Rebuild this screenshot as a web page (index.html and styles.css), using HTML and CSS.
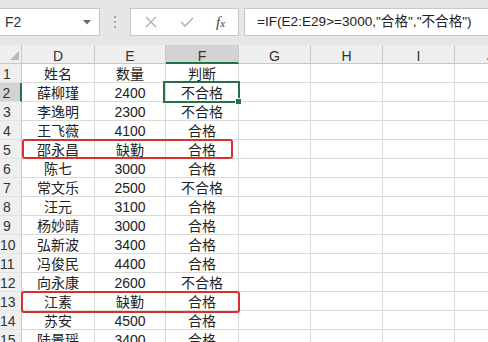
FILE: index.html
```html
<!DOCTYPE html>
<html>
<head>
<meta charset="utf-8">
<link rel="stylesheet" href="styles.css">
</head>
<body>
<div class="toolbar">
  <div class="namebox"><span>F2</span><svg class="dd" width="8" height="5" viewBox="0 0 8 5"><path d="M0 0H8L4 4.5Z" fill="#6a6a6a"/></svg></div>
  <div class="dots"><i></i><i></i><i></i></div>
  <div class="fbuttons">
    <svg class="ic" width="12" height="12" viewBox="0 0 12 12"><path d="M1 1L11 11M11 1L1 11" stroke="#b3b3b3" stroke-width="1.4" fill="none"/></svg>
    <svg class="ic" width="14" height="10" viewBox="0 0 14 10"><path d="M1 5L5 9L13 1" stroke="#b3b3b3" stroke-width="1.6" fill="none"/></svg>
    <span class="fx">f<span class="x">x</span></span>
  </div>
  <div class="finput">=IF(E2:E29&gt;=3000,"合格","不合格")</div>
</div>
<div class="sheet">
  <div class="c h corner"><svg width="22" height="18" viewBox="0 0 22 18"><path d="M10 15H19V6Z" fill="#b9b9b9"/></svg></div>
  <div class="c h">D</div><div class="c h">E</div><div class="c h sel">F</div><div class="c h">G</div><div class="c h">H</div><div class="c h">I</div><div class="c h">J</div>

  <div class="c rh">1</div><div class="c">姓名</div><div class="c">数量</div><div class="c">判断</div><div class="c"></div><div class="c"></div><div class="c"></div><div class="c"></div>
  <div class="c rh rsel">2</div><div class="c">薛柳瑾</div><div class="c">2400</div><div class="c">不合格</div><div class="c"></div><div class="c"></div><div class="c"></div><div class="c"></div>
  <div class="c rh">3</div><div class="c">李逸明</div><div class="c">2300</div><div class="c">不合格</div><div class="c"></div><div class="c"></div><div class="c"></div><div class="c"></div>
  <div class="c rh">4</div><div class="c">王飞薇</div><div class="c">4100</div><div class="c">合格</div><div class="c"></div><div class="c"></div><div class="c"></div><div class="c"></div>
  <div class="c rh">5</div><div class="c">邵永昌</div><div class="c">缺勤</div><div class="c">合格</div><div class="c"></div><div class="c"></div><div class="c"></div><div class="c"></div>
  <div class="c rh">6</div><div class="c">陈七</div><div class="c">3000</div><div class="c">合格</div><div class="c"></div><div class="c"></div><div class="c"></div><div class="c"></div>
  <div class="c rh">7</div><div class="c">常文乐</div><div class="c">2500</div><div class="c">不合格</div><div class="c"></div><div class="c"></div><div class="c"></div><div class="c"></div>
  <div class="c rh">8</div><div class="c">汪元</div><div class="c">3100</div><div class="c">合格</div><div class="c"></div><div class="c"></div><div class="c"></div><div class="c"></div>
  <div class="c rh">9</div><div class="c">杨妙晴</div><div class="c">3000</div><div class="c">合格</div><div class="c"></div><div class="c"></div><div class="c"></div><div class="c"></div>
  <div class="c rh">10</div><div class="c">弘新波</div><div class="c">3400</div><div class="c">合格</div><div class="c"></div><div class="c"></div><div class="c"></div><div class="c"></div>
  <div class="c rh">11</div><div class="c">冯俊民</div><div class="c">4400</div><div class="c">合格</div><div class="c"></div><div class="c"></div><div class="c"></div><div class="c"></div>
  <div class="c rh">12</div><div class="c">向永康</div><div class="c">2600</div><div class="c">不合格</div><div class="c"></div><div class="c"></div><div class="c"></div><div class="c"></div>
  <div class="c rh">13</div><div class="c">江素</div><div class="c">缺勤</div><div class="c">合格</div><div class="c"></div><div class="c"></div><div class="c"></div><div class="c"></div>
  <div class="c rh">14</div><div class="c">苏安</div><div class="c">4500</div><div class="c">合格</div><div class="c"></div><div class="c"></div><div class="c"></div><div class="c"></div>
  <div class="c rh">15</div><div class="c">陆景瑶</div><div class="c">3400</div><div class="c">合格</div><div class="c"></div><div class="c"></div><div class="c"></div><div class="c"></div>
</div>
<div class="selbox"><i class="handle"></i></div>
<div class="redbox r5"></div>
<div class="redbox r13"></div>
</body>
</html>
```

FILE: styles.css
```css
body {
  margin: 0;
  width: 488px;
  height: 342px;
  overflow: hidden;
  position: relative;
  background: #fff;
  font-family: "Liberation Sans", "Noto Sans CJK SC", sans-serif;
  color: #222;
}
.toolbar {
  height: 45px;
  box-sizing: border-box;
  padding-top: 8px;
  background: #e6e6e6;
  display: flex;
  align-items: flex-start;
}
.namebox {
  width: 100px;
  height: 28px;
  box-sizing: border-box;
  background: #fff;
  border: 1px solid #c8c8c8;
  border-left: none;
  display: flex;
  align-items: center;
  padding-left: 5px;
  font-size: 14px;
  color: #333;
}
.namebox .dd { margin-left: auto; margin-right: 8px; }
.dots {
  width: 30px;
  height: 28px;
  display: flex;
  flex-direction: column;
  align-items: center;
  justify-content: center;
  gap: 3px;
}
.dots i {
  width: 2px;
  height: 2px;
  background: #a6a6a6;
  display: block;
}
.fbuttons {
  width: 109px;
  height: 28px;
  box-sizing: border-box;
  background: #fff;
  border: 1px solid #c8c8c8;
  display: flex;
  align-items: center;
  padding-left: 14px;
}
.fbuttons .ic:nth-child(2) { margin-left: 23px; }
.fx {
  margin-left: 22px;
  font-family: "Liberation Serif", serif;
  font-style: italic;
  font-size: 15px;
  color: #444;
}
.fx .x { font-size: 11px; }
.finput {
  flex: 1;
  margin-left: 5px;
  height: 28px;
  box-sizing: border-box;
  background: #fff;
  border: 1px solid #c8c8c8;
  border-right: none;
  padding-left: 12px;
  font-size: 13.6px;
  line-height: 26px;
  color: #222;
  white-space: nowrap;
  overflow: hidden;
}
.sheet {
  display: grid;
  grid-template-columns: 22px 73px 71px 73px 72px 72px 72px 72px;
  grid-auto-rows: 19px;
}
.c {
  box-sizing: border-box;
  border-right: 1px solid #d9d9d9;
  border-bottom: 1px solid #d9d9d9;
  text-align: center;
  font-size: 14px;
  line-height: 17px;
  padding-top: 2px;
  white-space: nowrap;
  overflow: hidden;
}
.h {
  background: #efefef;
  border-right-color: #c8c8c8;
  border-bottom-color: #c8c8c8;
  color: #333;
  padding-top: 3px;
}
.h.sel {
  background: #d3d3d3;
  border-bottom: 2px solid #217346;
}
.corner { padding: 0; }
.corner svg { display: block; }
.rh {
  background: #efefef;
  border-right-color: #c8c8c8;
  border-bottom-color: #e3e3e3;
  padding-right: 7px;
  color: #333;
}
.rh.rsel {
  background: #d3d3d3;
  border-right: 2px solid #217346;
}
.selbox {
  position: absolute;
  left: 163px;
  top: 81px;
  width: 77px;
  height: 22px;
  box-sizing: border-box;
  border: 2px solid #217346;
}
.handle {
  position: absolute;
  right: -4px;
  bottom: -4px;
  width: 5px;
  height: 5px;
  background: #217346;
  border: 1px solid #fff;
  display: block;
}
.redbox {
  position: absolute;
  box-sizing: border-box;
  border: 2.5px solid #d9302b;
  border-radius: 3px;
}
.r5 { left: 22px; top: 139px; width: 211px; height: 20px; }
.r13 { left: 21px; top: 291px; width: 219px; height: 22px; }
```
